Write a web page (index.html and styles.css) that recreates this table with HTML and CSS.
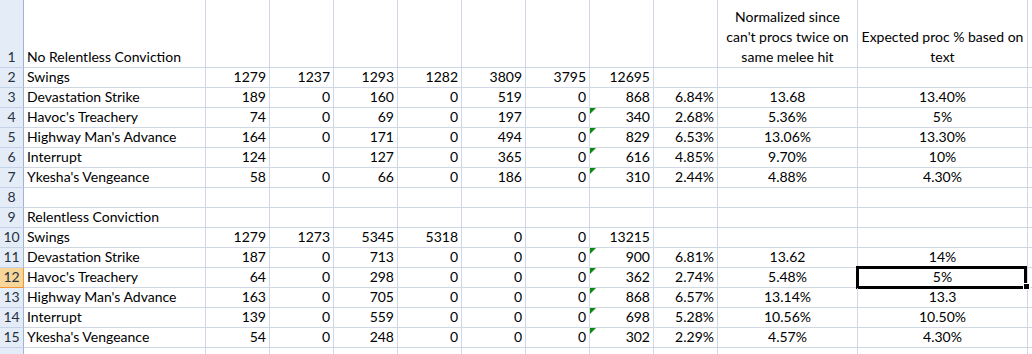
FILE: index.html
```html
<!DOCTYPE html>
<html>
<head>
<meta charset="utf-8">
<link rel="stylesheet" href="styles.css">
</head>
<body>
<div class="sheet">
  <div class="c h">1</div><div class="c t">No Relentless Conviction</div><div class="c"></div><div class="c"></div><div class="c"></div><div class="c"></div><div class="c"></div><div class="c"></div><div class="c"></div><div class="c"></div><div class="c m wrap">Normalized since can't procs twice on same melee hit</div><div class="c m wrap">Expected proc % based on text</div><div class="c e"></div>

  <div class="c h">2</div><div class="c t">Swings</div><div class="c n">1279</div><div class="c n">1237</div><div class="c n">1293</div><div class="c n">1282</div><div class="c n">3809</div><div class="c n">3795</div><div class="c n">12695</div><div class="c"></div><div class="c"></div><div class="c"></div><div class="c e"></div>

  <div class="c h">3</div><div class="c t">Devastation Strike</div><div class="c n">189</div><div class="c n">0</div><div class="c n">160</div><div class="c n">0</div><div class="c n">519</div><div class="c n">0</div><div class="c n">868</div><div class="c n">6.84%</div><div class="c m">13.68</div><div class="c m">13.40%</div><div class="c e"></div>

  <div class="c h">4</div><div class="c t">Havoc's Treachery</div><div class="c n">74</div><div class="c n">0</div><div class="c n">69</div><div class="c n">0</div><div class="c n">197</div><div class="c n">0</div><div class="c n tri">340</div><div class="c n">2.68%</div><div class="c m">5.36%</div><div class="c m">5%</div><div class="c e"></div>

  <div class="c h">5</div><div class="c t">Highway Man's Advance</div><div class="c n">164</div><div class="c n">0</div><div class="c n">171</div><div class="c n">0</div><div class="c n">494</div><div class="c n">0</div><div class="c n tri">829</div><div class="c n">6.53%</div><div class="c m">13.06%</div><div class="c m">13.30%</div><div class="c e"></div>

  <div class="c h">6</div><div class="c t">Interrupt</div><div class="c n">124</div><div class="c n"></div><div class="c n">127</div><div class="c n">0</div><div class="c n">365</div><div class="c n">0</div><div class="c n tri">616</div><div class="c n">4.85%</div><div class="c m">9.70%</div><div class="c m">10%</div><div class="c e"></div>

  <div class="c h">7</div><div class="c t">Ykesha's Vengeance</div><div class="c n">58</div><div class="c n">0</div><div class="c n">66</div><div class="c n">0</div><div class="c n">186</div><div class="c n">0</div><div class="c n tri">310</div><div class="c n">2.44%</div><div class="c m">4.88%</div><div class="c m">4.30%</div><div class="c e"></div>

  <div class="c h">8</div><div class="c t"></div><div class="c"></div><div class="c"></div><div class="c"></div><div class="c"></div><div class="c"></div><div class="c"></div><div class="c"></div><div class="c"></div><div class="c"></div><div class="c"></div><div class="c e"></div>

  <div class="c h">9</div><div class="c t">Relentless Conviction</div><div class="c"></div><div class="c"></div><div class="c"></div><div class="c"></div><div class="c"></div><div class="c"></div><div class="c"></div><div class="c"></div><div class="c"></div><div class="c"></div><div class="c e"></div>

  <div class="c h">10</div><div class="c t">Swings</div><div class="c n">1279</div><div class="c n">1273</div><div class="c n">5345</div><div class="c n">5318</div><div class="c n">0</div><div class="c n">0</div><div class="c n">13215</div><div class="c"></div><div class="c"></div><div class="c"></div><div class="c e"></div>

  <div class="c h">11</div><div class="c t">Devastation Strike</div><div class="c n">187</div><div class="c n">0</div><div class="c n">713</div><div class="c n">0</div><div class="c n">0</div><div class="c n">0</div><div class="c n tri">900</div><div class="c n">6.81%</div><div class="c m">13.62</div><div class="c m">14%</div><div class="c e"></div>

  <div class="c h hl">12</div><div class="c t">Havoc's Treachery</div><div class="c n">64</div><div class="c n">0</div><div class="c n">298</div><div class="c n">0</div><div class="c n">0</div><div class="c n">0</div><div class="c n tri">362</div><div class="c n">2.74%</div><div class="c m">5.48%</div><div class="c m sel">5%</div><div class="c e"></div>

  <div class="c h">13</div><div class="c t">Highway Man's Advance</div><div class="c n">163</div><div class="c n">0</div><div class="c n">705</div><div class="c n">0</div><div class="c n">0</div><div class="c n">0</div><div class="c n tri">868</div><div class="c n">6.57%</div><div class="c m">13.14%</div><div class="c m">13.3</div><div class="c e"></div>

  <div class="c h">14</div><div class="c t">Interrupt</div><div class="c n">139</div><div class="c n">0</div><div class="c n">559</div><div class="c n">0</div><div class="c n">0</div><div class="c n">0</div><div class="c n tri">698</div><div class="c n">5.28%</div><div class="c m">10.56%</div><div class="c m">10.50%</div><div class="c e"></div>

  <div class="c h">15</div><div class="c t">Ykesha's Vengeance</div><div class="c n">54</div><div class="c n">0</div><div class="c n">248</div><div class="c n">0</div><div class="c n">0</div><div class="c n">0</div><div class="c n tri">302</div><div class="c n">2.29%</div><div class="c m">4.57%</div><div class="c m">4.30%</div><div class="c e"></div>

  <div class="c h"></div><div class="c"></div><div class="c"></div><div class="c"></div><div class="c"></div><div class="c"></div><div class="c"></div><div class="c"></div><div class="c"></div><div class="c"></div><div class="c"></div><div class="c"></div><div class="c e"></div>
</div>
</body>
</html>
```

FILE: styles.css
```css
html, body {
  margin: 0;
  padding: 0;
  background: #fff;
}
body {
  width: 1032px;
  height: 354px;
  overflow: hidden;
  font-family: Lato, "Open Sans", sans-serif;
  font-size: 14px;
  color: #000;
}
.sheet {
  display: grid;
  grid-template-columns: 24px 182px repeat(8, 64px) 140px 170px 1fr;
  grid-template-rows: 68px repeat(14, 20px) 20px;
}
.c {
  box-sizing: border-box;
  border-right: 1px solid #d0d7e5;
  border-bottom: 1px solid #d0d7e5;
  display: flex;
  align-items: flex-end;
  padding: 0 3px 1px 3px;
  line-height: 18px;
  white-space: nowrap;
  position: relative;
}
.e {
  border-right: none;
}
.h {
  background: #e4ecf7;
  border-right: 1px solid #9eb6ce;
  border-bottom: 1px solid #c5d3e6;
  justify-content: center;
  padding: 0 0 1px 0;
  color: #27313f;
}
.hl {
  background: #f8d69a;
  border-right: 1px solid #f29436;
  border-bottom: 1px solid #f29436;
}
.t {
  justify-content: flex-start;
}
.n {
  justify-content: flex-end;
}
.m {
  justify-content: center;
}
.wrap {
  white-space: normal;
  text-align: center;
  line-height: 20px;
  padding: 0 2px 0 2px;
}
.tri::before {
  content: "";
  position: absolute;
  left: 0;
  top: 0;
  width: 0;
  height: 0;
  border-top: 6px solid #118811;
  border-right: 6px solid transparent;
}
.sel::after {
  content: "";
  position: absolute;
  left: -2px;
  top: -2px;
  right: 0;
  bottom: -2px;
  border: 3px solid #000;
}
.sel::before {
  content: "";
  position: absolute;
  right: -3px;
  bottom: -3px;
  width: 5px;
  height: 5px;
  background: #000;
  border: 1px solid #fff;
  z-index: 2;
}
```
